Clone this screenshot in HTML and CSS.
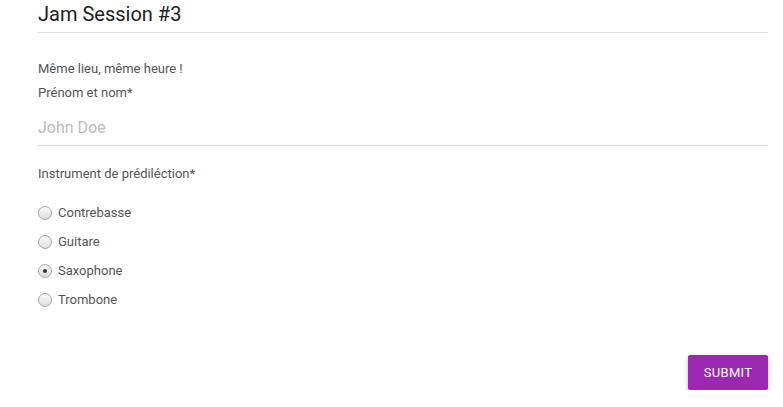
FILE: index.html
```html
<!DOCTYPE html>
<html lang="fr">
<head>
<meta charset="utf-8">
<link rel="stylesheet" href="styles.css">
</head>
<body>
<form class="form">
  <h1 class="title">Jam Session #3</h1>
  <p class="desc">Même lieu, même heure !</p>
  <label class="label">Prénom et nom*</label>
  <div class="input">John Doe</div>
  <p class="label q">Instrument de prédiléction*</p>
  <ul class="radios">
    <li class="radio"><span class="dot"></span>Contrebasse</li>
    <li class="radio"><span class="dot"></span>Guitare</li>
    <li class="radio"><span class="dot checked"></span>Saxophone</li>
    <li class="radio"><span class="dot"></span>Trombone</li>
  </ul>
  <div class="actions"><button type="button" class="submit">SUBMIT</button></div>
</form>
</body>
</html>
```
FILE: styles.css
```css
html, body { margin: 0; padding: 0; background: #fff; }
body { font-family: Roboto, "Liberation Sans", sans-serif; color: #555; }
.form { padding: 0 15px 0 38px; display: flex; flex-direction: column; }
.title {
  margin: 0; font-weight: 400; font-size: 20px; color: #212121;
  height: 32px; line-height: 29px; border-bottom: 1px solid #e0e0e0;
}
.desc { margin: 28px 0 0; font-size: 13px; line-height: 16px; }
.label { display: block; margin: 8px 0 0; font-size: 13px; line-height: 16px; }
.input {
  margin-top: 17px; font-size: 16px; line-height: 19px; color: #bdbdbd;
  padding-bottom: 8px; border-bottom: 1px solid #d6d6d6;
}
.q { margin-top: 20px; }
.radios { list-style: none; margin: 23px 0 0; padding: 0; display: flex; flex-direction: column; gap: 13px; }
.radio { display: flex; align-items: center; font-size: 13px; line-height: 16px; gap: 6px; }
.dot {
  width: 12px; height: 12px; border-radius: 50%;
  border: 1px solid #a6a6a6;
  background: linear-gradient(#fcfcfc, #dcdcdc);
  display: flex; align-items: center; justify-content: center;
}
.dot.checked::after { content: ""; width: 4px; height: 4px; border-radius: 50%; background: #333; }
.actions { display: flex; justify-content: flex-end; margin-top: 47px; }
.submit {
  width: 80px; height: 35px; border: 0; border-radius: 2px; background: #9c27b0;
  color: #fff; font-family: Roboto, "Liberation Sans", sans-serif; font-size: 13px;
  letter-spacing: 0.3px; box-shadow: 0 2px 4px rgba(0,0,0,0.3);
}
```
